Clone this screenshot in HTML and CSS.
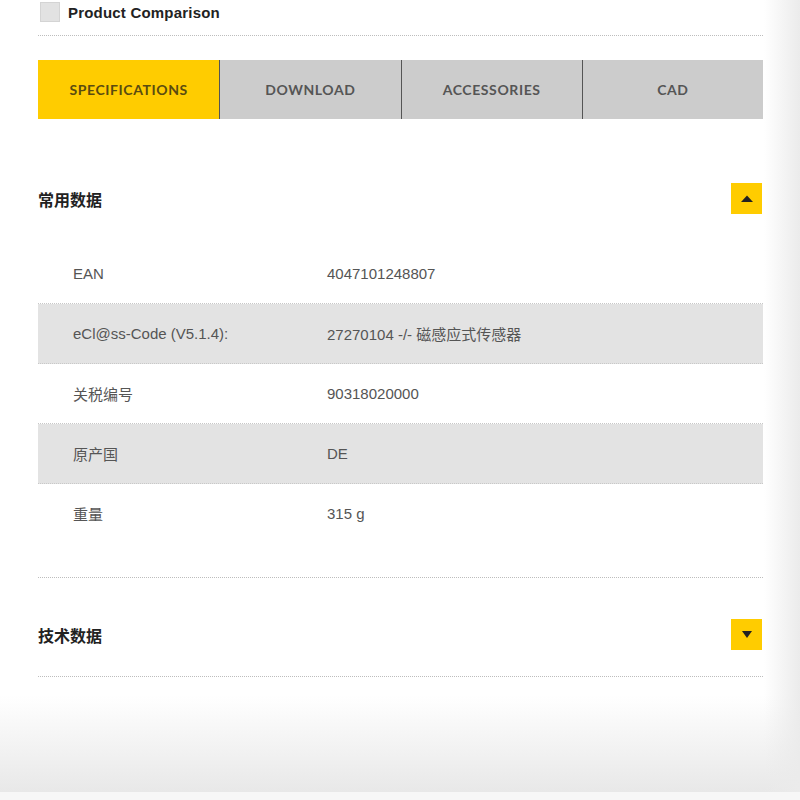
FILE: index.html
```html
<!DOCTYPE html>
<html lang="zh">
<head>
<meta charset="utf-8">
<title>Product</title>
<link rel="stylesheet" href="styles.css">
</head>
<body>
<div class="page">
  <div class="content">
    <label class="compare">
      <span class="checkbox"></span>
      <span class="compare-label">Product Comparison</span>
    </label>
    <div class="dots"></div>

    <nav class="tabs">
      <div class="tab active">SPECIFICATIONS</div>
      <div class="tab">DOWNLOAD</div>
      <div class="tab">ACCESSORIES</div>
      <div class="tab">CAD</div>
    </nav>

    <section class="section open">
      <div class="section-head">
        <h2 class="section-title">常用数据</h2>
        <button class="toggle" aria-label="collapse">
          <svg width="12" height="7" viewBox="0 0 12 7"><path d="M0 7 L6 0.5 L12 7 Z" fill="#222"/></svg>
        </button>
      </div>
      <div class="table">
        <div class="row"><div class="cell key">EAN</div><div class="cell val">4047101248807</div></div>
        <div class="row alt"><div class="cell key">eCl@ss-Code (V5.1.4):</div><div class="cell val">27270104 -/- 磁感应式传感器</div></div>
        <div class="row"><div class="cell key">关税编号</div><div class="cell val">90318020000</div></div>
        <div class="row alt"><div class="cell key">原产国</div><div class="cell val">DE</div></div>
        <div class="row last"><div class="cell key">重量</div><div class="cell val">315 g</div></div>
      </div>
    </section>

    <div class="dots sep-a"></div>
    <section class="section closed">
      <div class="section-head">
        <h2 class="section-title">技术数据</h2>
        <button class="toggle" aria-label="expand">
          <svg width="10" height="7" viewBox="0 0 10 7"><path d="M0 0 L10 0 L5 7 Z" fill="#222"/></svg>
        </button>
      </div>
    </section>
    <div class="dots"></div>
  </div>
</div>
</body>
</html>
```

FILE: styles.css
```css
* { box-sizing: border-box; }
html, body { margin: 0; padding: 0; }
body {
  background: #f7f7f7;
  font-family: "Liberation Sans", Arial, "Noto Sans CJK SC", sans-serif;
  color: #555;
  height: 800px;
  overflow: hidden;
}
.page {
  height: 792px;
  background-color: #fff;
  background-image:
    linear-gradient(to right, rgba(235,235,235,0) 0, rgba(235,235,235,0) 764px, #ebebeb 800px),
    linear-gradient(to bottom, rgba(232,232,232,0) 0, rgba(232,232,232,0) 695px, #e8e8e8 792px);
}
.content {
  width: 725px;
  margin-left: 38px;
}
.compare {
  display: flex;
  align-items: center;
  gap: 8px;
  height: 24px;
  padding-left: 2px;
}
.checkbox {
  width: 20px;
  height: 20px;
  background: #e2e2e2;
  border: 1px solid #d4d4d4;
}
.compare-label {
  font-weight: bold;
  font-size: 15px;
  letter-spacing: 0.2px;
  color: #222;
}
.dots {
  height: 1px;
  border-top: 1px dotted #bdbdbd;
  margin-top: 11px;
}
.tabs {
  display: grid;
  grid-template-columns: repeat(4, 1fr);
  height: 59px;
  margin-top: 24px;
}
.tab {
  display: flex;
  align-items: center;
  justify-content: center;
  background: #cccccc;
  border-left: 1px solid #555;
  font-family: Lato, "Liberation Sans", sans-serif;
  font-weight: bold;
  font-size: 14px;
  letter-spacing: 0.6px;
  color: #555;
}
.tab:first-child { border-left: 0; }
.tab.active { background: #ffcc00; color: #5a4b10; }
.section-head {
  display: flex;
  align-items: center;
  justify-content: space-between;
  height: 31px;
}
.open .section-head { margin-top: 64px; }
.section-title {
  margin: 0;
  font-family: "Noto Sans CJK SC", sans-serif;
  font-size: 16px;
  font-weight: bold;
  color: #222;
}
.toggle {
  width: 31px;
  height: 31px;
  margin-right: 1px;
  border: 0;
  padding: 0;
  background: #ffcc00;
  display: flex;
  align-items: center;
  justify-content: center;
}
.table { margin-top: 30px; }
.row {
  display: flex;
  align-items: center;
  height: 60px;
  background: #fff;
  border-bottom: 1px dotted #c8c8c8;
  font-size: 15px;
  color: #555;
}
.row.alt { background: #e3e3e3; }
.row.last { border-bottom: 0; height: 59px; }
.cell.key { width: 289px; padding-left: 35px; }
.cell.key, .cell.val { font-family: "Liberation Sans", Arial, "Noto Sans CJK SC", sans-serif; }
.dots.sep-a { margin-top: 34px; }
.closed .section-head { margin-top: 41px; }
.closed + .dots { margin-top: 26px; }
```
